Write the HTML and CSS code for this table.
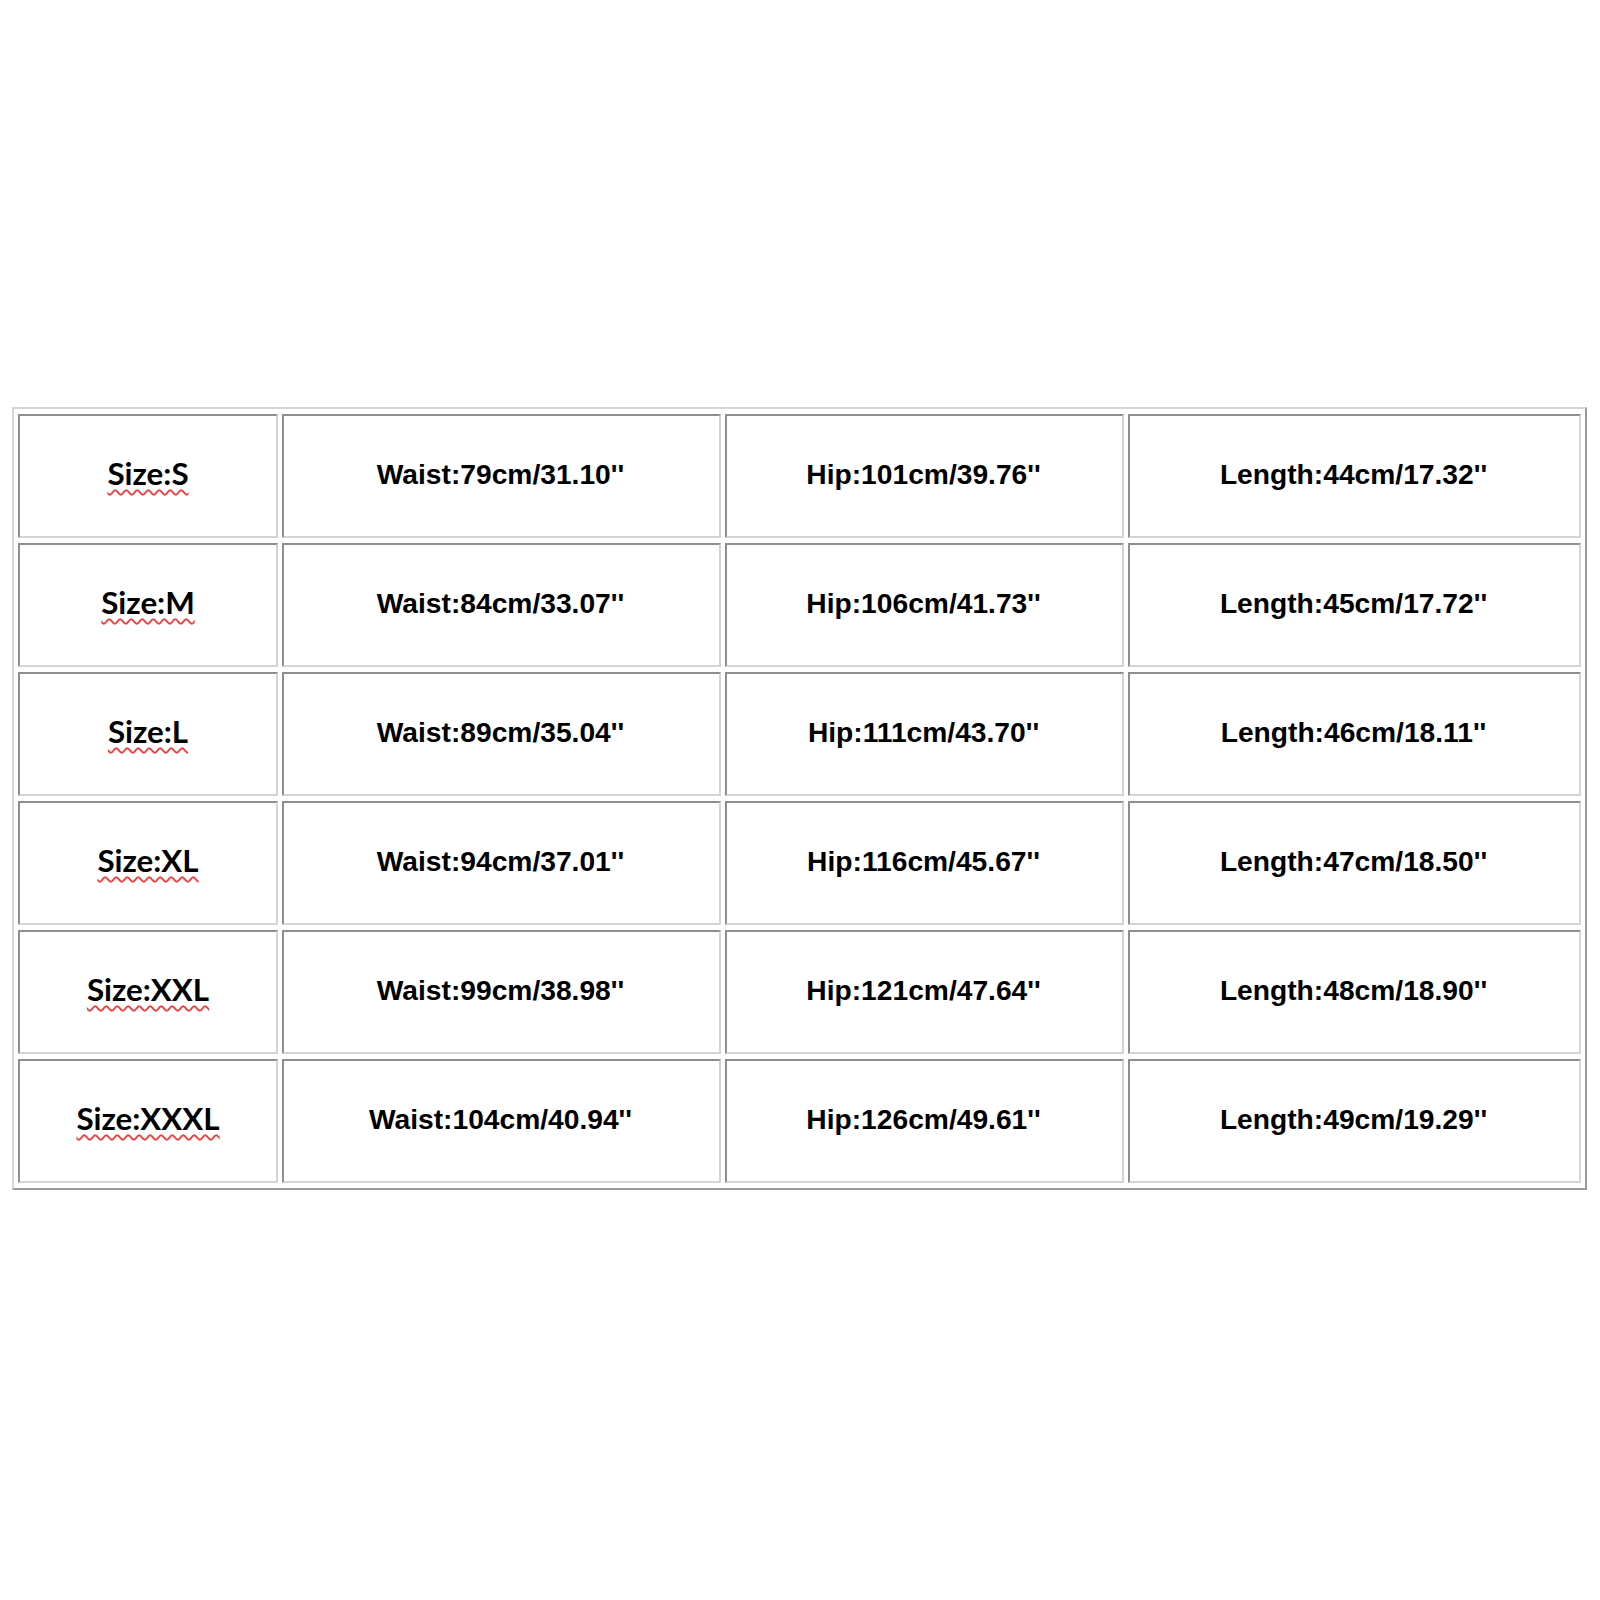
FILE: index.html
```html
<!DOCTYPE html>
<html>
<head>
<meta charset="utf-8">
<link rel="stylesheet" href="styles.css">
</head>
<body>
<table class="chart">
<colgroup>
<col class="c1"><col class="c2"><col class="c3"><col class="c4">
</colgroup>
<tr><td class="size"><span class="sp">Size:S</span></td><td>Waist:79cm/31.10''</td><td>Hip:101cm/39.76''</td><td>Length:44cm/17.32''</td></tr>
<tr><td class="size"><span class="sp">Size:M</span></td><td>Waist:84cm/33.07''</td><td>Hip:106cm/41.73''</td><td>Length:45cm/17.72''</td></tr>
<tr><td class="size"><span class="sp">Size:L</span></td><td>Waist:89cm/35.04''</td><td>Hip:111cm/43.70''</td><td>Length:46cm/18.11''</td></tr>
<tr><td class="size"><span class="sp">Size:XL</span></td><td>Waist:94cm/37.01''</td><td>Hip:116cm/45.67''</td><td>Length:47cm/18.50''</td></tr>
<tr><td class="size"><span class="sp">Size:XXL</span></td><td>Waist:99cm/38.98''</td><td>Hip:121cm/47.64''</td><td>Length:48cm/18.90''</td></tr>
<tr><td class="size"><span class="sp">Size:XXXL</span></td><td>Waist:104cm/40.94''</td><td>Hip:126cm/49.61''</td><td>Length:49cm/19.29''</td></tr>
</table>
</body>
</html>
```
FILE: styles.css
```css
html, body {
  margin: 0;
  padding: 0;
  background: #ffffff;
}
body {
  padding-top: 407px;
  padding-left: 12px;
  font-family: "Liberation Sans", Arial, sans-serif;
}
.chart {
  table-layout: fixed;
  width: 1575px;
  border-collapse: separate;
  border-spacing: 4px 5px;
  border-style: solid;
  border-width: 2px;
  border-color: #d6d6d6 #9a9a9a #9a9a9a #d6d6d6;
}
.c1 { width: 260px; }
.c2 { width: 439px; }
.c3 { width: 399px; }
.c4 { width: 453px; }
.chart td {
  box-sizing: border-box;
  height: 124px;
  padding: 0 2px 4px 0;
  border-style: solid;
  border-width: 2px;
  border-color: #8e8e8e #d4d4d4 #d4d4d4 #8e8e8e;
  text-align: center;
  vertical-align: middle;
  font-size: 28.2px;
  font-weight: bold;
  color: #000000;
  white-space: nowrap;
}
.chart td.size {
  font-family: Lato, "Open Sans", sans-serif;
  font-size: 31.3px;
  font-weight: bold;
  padding: 0 0 6px 0;
}
.sp {
  text-decoration-line: underline;
  text-decoration-style: wavy;
  text-decoration-color: #f04040;
  text-decoration-thickness: 1.5px;
  text-underline-offset: 4px;
}
```
